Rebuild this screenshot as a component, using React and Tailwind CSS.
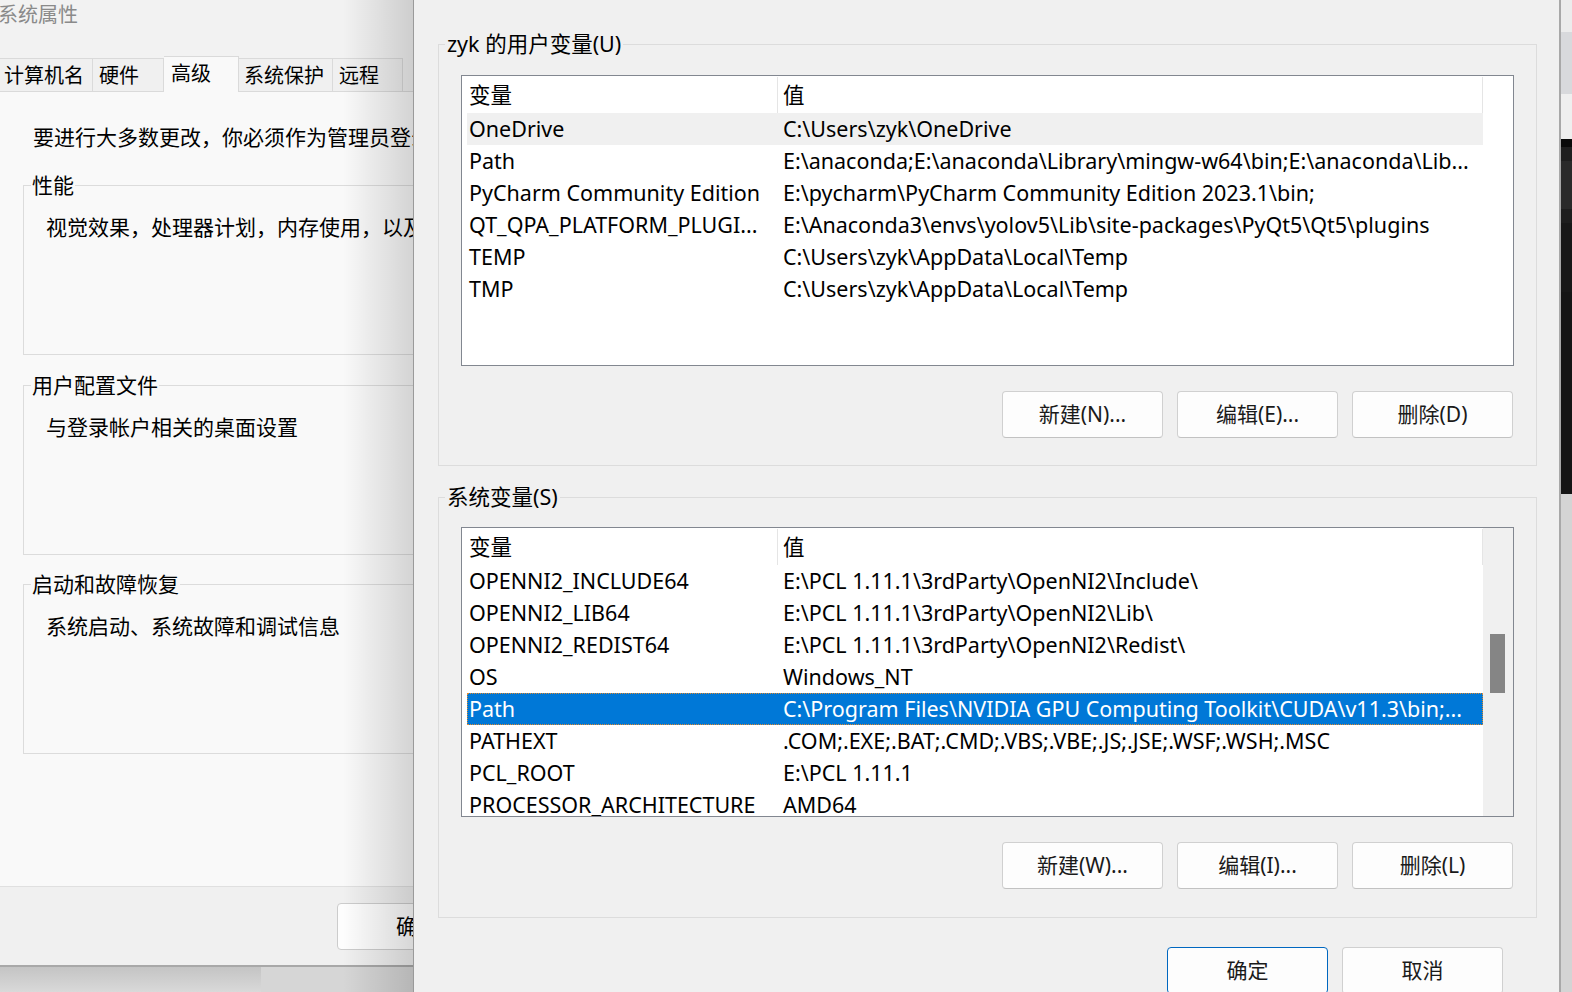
import React from 'react'

const userVars = [
  ['OneDrive', 'C:\\Users\\zyk\\OneDrive'],
  ['Path', 'E:\\anaconda;E:\\anaconda\\Library\\mingw-w64\\bin;E:\\anaconda\\Lib...'],
  ['PyCharm Community Edition', 'E:\\pycharm\\PyCharm Community Edition 2023.1\\bin;'],
  ['QT_QPA_PLATFORM_PLUGI...', 'E:\\Anaconda3\\envs\\yolov5\\Lib\\site-packages\\PyQt5\\Qt5\\plugins'],
  ['TEMP', 'C:\\Users\\zyk\\AppData\\Local\\Temp'],
  ['TMP', 'C:\\Users\\zyk\\AppData\\Local\\Temp'],
]

const sysVars = [
  ['OPENNI2_INCLUDE64', 'E:\\PCL 1.11.1\\3rdParty\\OpenNI2\\Include\\'],
  ['OPENNI2_LIB64', 'E:\\PCL 1.11.1\\3rdParty\\OpenNI2\\Lib\\'],
  ['OPENNI2_REDIST64', 'E:\\PCL 1.11.1\\3rdParty\\OpenNI2\\Redist\\'],
  ['OS', 'Windows_NT'],
  ['Path', 'C:\\Program Files\\NVIDIA GPU Computing Toolkit\\CUDA\\v11.3\\bin;...'],
  ['PATHEXT', '.COM;.EXE;.BAT;.CMD;.VBS;.VBE;.JS;.JSE;.WSF;.WSH;.MSC'],
  ['PCL_ROOT', 'E:\\PCL 1.11.1'],
  ['PROCESSOR_ARCHITECTURE', 'AMD64'],
]

function WinButton({ children, primary }) {
  return (
    <button
      className={
        primary
          ? 'w-[161px] h-[47px] rounded-[4px] border border-[#0067c0] bg-[#fdfdfd] text-[21px] text-[#1a1a1a]'
          : 'w-[161px] h-[47px] rounded-[4px] border border-[#d0d0d0] border-b-[#c2c2c2] bg-[#fdfdfd] text-[21px] text-[#1a1a1a]'
      }
    >
      {children}
    </button>
  )
}

function VarList({ rows, selected, focused, scrollbar, height }) {
  return (
    <div className={`${height} border border-[#828790] bg-white overflow-hidden flex`}>
      <div className="pl-[5px] pt-[1px] w-[1021px] shrink-0">
        {/* header */}
        <div className="flex h-[36px] w-[1016px]">
          <div className="w-[311px] shrink-0 pl-[2px] flex items-center border-r border-[#e5e5e5]">变量</div>
          <div className="flex-1 pl-[5px] flex items-center border-r border-[#e5e5e5]">值</div>
        </div>
        {rows.map(([name, value], i) => {
          let cls = 'flex h-[32px] w-[1016px] items-center text-black'
          if (i === selected) {
            cls = focused
              ? 'flex h-[32px] w-[1016px] items-center bg-[#0078d7] text-white outline-1 outline-dotted outline-[#e08a2f] -outline-offset-1'
              : 'flex h-[32px] w-[1016px] items-center bg-[#f0f0f0] text-black'
          }
          return (
            <div key={name} className={cls}>
              <div className="w-[311px] shrink-0 pl-[2px] whitespace-nowrap overflow-hidden">{name}</div>
              <div className="flex-1 pl-[5px] whitespace-nowrap overflow-hidden">{value}</div>
            </div>
          )
        })}
      </div>
      {scrollbar ? (
        <div className="w-[30px] shrink-0 bg-[#f0f0f0] pt-[106px] pl-[7px]">
          <div className="w-[15px] h-[59px] bg-[#858585]"></div>
        </div>
      ) : (
        <div className="w-[30px] shrink-0"></div>
      )}
    </div>
  )
}

function LeftGroup({ title, text }) {
  return (
    <fieldset className="h-[182px] w-[560px] border border-[#dcdcdc]">
      <legend className="ml-[7px] px-[1px] leading-[24px]">{title}</legend>
      <div className="mt-[18px] pl-[22px] leading-[24px] whitespace-nowrap">{text}</div>
    </fieldset>
  )
}

export default function App() {
  return (
    <div className="w-[1572px] h-[992px] overflow-hidden flex font-['Noto_Sans','Noto_Sans_CJK_SC',sans-serif] text-black">
      {/* 系统属性 (behind) */}
      <div className="relative w-[413px] h-[992px] shrink-0 overflow-hidden flex flex-col bg-[#f2f2f2] text-[21px]">
        <div className="h-[57px] shrink-0 pt-[3px]">
          <div className="-ml-[2px] leading-[24px] text-[20px] text-[#8a8a8a] whitespace-nowrap">系统属性</div>
        </div>
        <div className="h-[35px] shrink-0 flex items-end border-b border-[#dadada] w-[560px] text-[20px]">
          <div className="w-[93px] h-[33px] border-t border-r border-[#dadada] bg-[#f0f0f0] pl-[4px] leading-[33px]">计算机名</div>
          <div className="w-[71px] h-[33px] border-t border-r border-[#dadada] bg-[#f0f0f0] pl-[6px] leading-[33px]">硬件</div>
          <div className="relative z-10 -mb-px w-[75px] h-[36px] border-t border-r border-[#dadada] bg-[#f9f9f9] pl-[7px] leading-[34px]">高级</div>
          <div className="w-[94px] h-[33px] border-t border-r border-[#dadada] bg-[#f0f0f0] pl-[5px] leading-[33px]">系统保护</div>
          <div className="w-[70px] h-[33px] border-t border-r border-[#dadada] bg-[#f0f0f0] pl-[6px] leading-[33px]">远程</div>
        </div>
        <div className="h-[794px] shrink-0 bg-[#f9f9f9] pl-[23px] pt-[33px] w-[600px]">
          <div className="pl-[10px] leading-[24px] whitespace-nowrap">要进行大多数更改，你必须作为管理员登录。</div>
          <div className="mt-[24px]">
            <LeftGroup title="性能" text="视觉效果，处理器计划，内存使用，以及虚拟内存" />
          </div>
          <div className="mt-[18px]">
            <LeftGroup title="用户配置文件" text="与登录帐户相关的桌面设置" />
          </div>
          <div className="mt-[17px]">
            <LeftGroup title="启动和故障恢复" text="系统启动、系统故障和调试信息" />
          </div>
        </div>
        <div className="h-[79px] shrink-0 border-t border-[#e0e0e0] bg-[#f0f0f0] pl-[337px] pt-[16px] w-[600px]">
          <button className="w-[160px] h-[47px] rounded-[4px] border border-[#cccccc] bg-[#fdfdfd] text-[21px]">确定</button>
        </div>
        <div className="flex-1 border-t-2 border-[#a8a8a8] flex">
          <div className="w-[261px] bg-linear-to-b from-[#c4c4c4] to-[#d9d9d9]"></div>
          <div className="flex-1 bg-[#d6d6d6]"></div>
        </div>
        {/* shadow cast by the front dialog */}
        <div className="absolute top-0 right-0 w-[70px] h-full bg-linear-to-r from-black/0 to-black/15 pointer-events-none"></div>
      </div>

      {/* 环境变量 (front) */}
      <div className="w-[1146px] h-[992px] shrink-0 bg-[#f0f0f0] border-l border-[#9a9a9a] pl-[24px] text-[21.5px]">
        <fieldset className="mt-[32px] w-[1099px] border border-[#dcdcdc] pb-[27px]">
          <legend className="ml-[6px] px-[2px] leading-[24px]">zyk 的用户变量(U)</legend>
          <div className="px-[22px]">
            <div className="mt-[19px]">
              <VarList rows={userVars} selected={0} focused={false} scrollbar={false} height="h-[291px]" />
            </div>
            <div className="mt-[25px] flex justify-end gap-[14px] pr-[1px]">
              <WinButton>新建(N)...</WinButton>
              <WinButton>编辑(E)...</WinButton>
              <WinButton>删除(D)</WinButton>
            </div>
          </div>
        </fieldset>

        <fieldset className="mt-[19px] w-[1099px] border border-[#dcdcdc] pb-[28px]">
          <legend className="ml-[6px] px-[2px] leading-[24px]">系统变量(S)</legend>
          <div className="px-[22px]">
            <div className="mt-[18px]">
              <VarList rows={sysVars} selected={4} focused={true} scrollbar={true} height="h-[290px]" />
            </div>
            <div className="mt-[25px] flex justify-end gap-[14px] pr-[1px]">
              <WinButton>新建(W)...</WinButton>
              <WinButton>编辑(I)...</WinButton>
              <WinButton>删除(L)</WinButton>
            </div>
          </div>
        </fieldset>

        <div className="mt-[29px] w-[1099px] flex justify-end gap-[14px] pr-[34px]">
          <WinButton primary>确定</WinButton>
          <WinButton>取消</WinButton>
        </div>
      </div>

      {/* background windows at the far right */}
      <div className="flex-1 flex flex-col border-l-2 border-[#a8a8a8]">
        <div className="h-[32px] bg-[#ececec]"></div>
        <div className="h-[62px] bg-[#d8d9dc]"></div>
        <div className="h-[45px] bg-[#efefef]"></div>
        <div className="h-[8px] bg-[#0a0a0a]"></div>
        <div className="h-[14px] bg-[#1f1f1f]"></div>
        <div className="h-[48px] bg-[#2a2a2a]"></div>
        <div className="h-[14px] bg-[#1e1e1e]"></div>
        <div className="h-[69px] bg-[#181818]"></div>
        <div className="h-[202px] bg-[#151515]"></div>
        <div className="flex-1 bg-[#d4d4d4]"></div>
      </div>
    </div>
  )
}
